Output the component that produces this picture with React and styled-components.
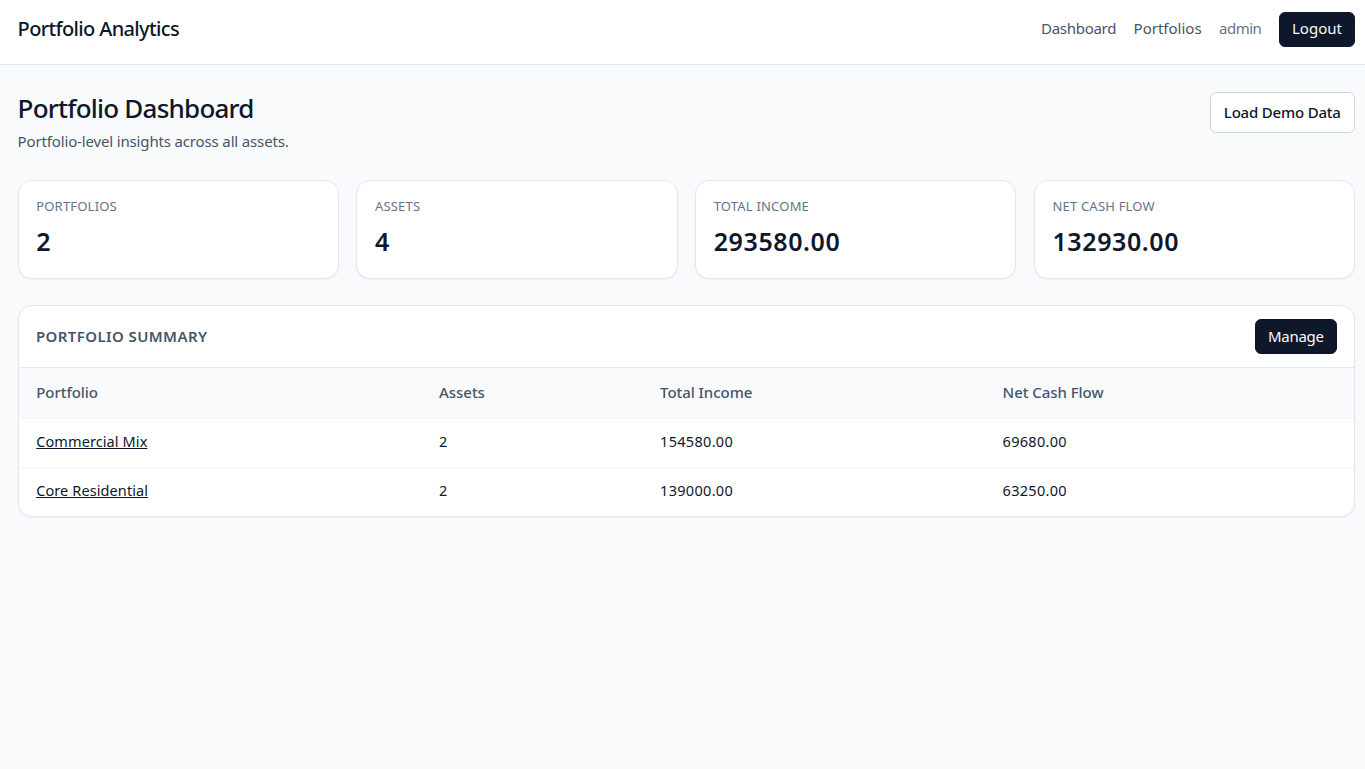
import React from "react";
import styled, { createGlobalStyle } from "styled-components";

const Global = createGlobalStyle`
  html, body { margin: 0; padding: 0; background: #f8fafc; }
  body { font-family: "Noto Sans", "Open Sans", sans-serif; color: #0f172a; min-height: 769px; }
  * { box-sizing: border-box; }
`;

const NavBar = styled.header`
  height: 65px;
  background: #fff;
  border-bottom: 1px solid #e2e8f0;
  display: flex;
  align-items: center;
  justify-content: space-between;
  padding: 12px 10px 17px 17.6px;
`;
const Brand = styled.div`
  font-size: 20px;
  font-weight: 500;
  letter-spacing: -0.65px;
  padding-bottom: 2px;
`;
const NavLinks = styled.nav`
  display: flex;
  align-items: center;
  gap: 17.5px;
`;
const NavLink = styled.a`
  display: block;
  font-size: 15px;
  padding-bottom: 4px;
  letter-spacing: ${(p) => p.$spacing || "-0.3px"};
  color: ${(p) => (p.$muted ? "#64748b" : "#475569")};
`;
const Button = styled.button`
  font-family: inherit;
  font-size: 15px;
  letter-spacing: ${(p) => p.$spacing};
  border-radius: 6px;
  border: 1px solid ${(p) => (p.$dark ? "#0f172a" : "#cbd5e1")};
  background: ${(p) => (p.$dark ? "#0f172a" : "#fff")};
  color: ${(p) => (p.$dark ? "#f8fafc" : "#0f172a")};
  font-weight: ${(p) => (p.$dark ? 400 : 500)};
  height: ${(p) => (p.$dark ? "35px" : "41px")};
  padding: 0 ${(p) => p.$pad || "12px"} ${(p) => p.$lift || "2px"};
`;
const Main = styled.main`
  padding: 27px 10px 0 17.6px;
`;
const PageHead = styled.div`
  display: flex;
  justify-content: space-between;
  align-items: flex-start;
  height: 61px;
`;
const Title = styled.h1`
  margin: 0;
  font-size: 26px;
  line-height: 33px;
  font-weight: 500;
  letter-spacing: -0.78px;
`;
const Subtitle = styled.p`
  margin: 5px 0 0;
  font-size: 15px;
  line-height: 22px;
  letter-spacing: -0.15px;
  color: #475569;
`;
const StatGrid = styled.section`
  display: grid;
  grid-template-columns: repeat(4, 1fr);
  gap: 17.6px;
  margin-top: 27px;
`;
const Card = styled.div`
  background: #fff;
  border: 1px solid #e2e8f0;
  border-radius: 14px;
  box-shadow: 0 1px 2px rgba(15, 23, 42, 0.05);
`;
const StatCard = styled(Card)`
  height: 99px;
  padding: 16px 17.6px;
`;
const StatLabel = styled.div`
  font-size: 13px;
  line-height: 18px;
  letter-spacing: 0.2px;
  color: #64748b;
`;
const StatValue = styled.div`
  margin-top: 9px;
  font-size: 25px;
  line-height: 34px;
  font-weight: 600;
  letter-spacing: 0.6px;
`;
const Panel = styled(Card)`
  margin-top: 26px;
  overflow: hidden;
`;
const PanelHead = styled.div`
  height: 62px;
  display: flex;
  align-items: center;
  justify-content: space-between;
  padding: 0 17.4px;
  border-bottom: 1px solid #e2e8f0;
`;
const PanelTitle = styled.h2`
  margin: 0;
  padding-bottom: 2px;
  font-size: 15px;
  font-weight: 600;
  letter-spacing: 0.4px;
  color: #475569;
`;
const Table = styled.table`
  width: 100%;
  border-collapse: collapse;
  table-layout: fixed;
  font-size: 14.5px;
`;
const Th = styled.th`
  height: 50px;
  padding: 0 17.6px 2px;
  text-align: left;
  font-weight: 500;
  font-size: 15px;
  letter-spacing: -0.05px;
  background: #f8fafc;
  color: #475569;
`;
const Td = styled.td`
  height: 49px;
  padding: 0 17.6px 4px;
  letter-spacing: ${(p) => (p.$num ? "0.3px" : "0.1px")};
  border-top: 1px solid #f1f5f9;
`;
const RowLink = styled.a`
  color: #0f172a;
  text-decoration: underline;
`;

const stats = [
  ["PORTFOLIOS", "2"],
  ["ASSETS", "4"],
  ["TOTAL INCOME", "293580.00"],
  ["NET CASH FLOW", "132930.00"],
];
const rows = [
  ["Commercial Mix", "2", "154580.00", "69680.00"],
  ["Core Residential", "2", "139000.00", "63250.00"],
];

export default function App() {
  return (
    <>
      <Global />
      <NavBar>
        <Brand>Portfolio Analytics</Brand>
        <NavLinks>
          <NavLink>Dashboard</NavLink>
          <NavLink $spacing="0">Portfolios</NavLink>
          <NavLink $muted $spacing="-0.5px">admin</NavLink>
          <Button $dark $spacing="0.03px" $lift="4px">Logout</Button>
        </NavLinks>
      </NavBar>
      <Main>
        <PageHead>
          <div>
            <Title>Portfolio Dashboard</Title>
            <Subtitle>Portfolio-level insights across all assets.</Subtitle>
          </div>
          <Button $spacing="-0.2px" $pad="13.3px">Load Demo Data</Button>
        </PageHead>
        <StatGrid>
          {stats.map(([l, v]) => (
            <StatCard key={l}>
              <StatLabel>{l}</StatLabel>
              <StatValue>{v}</StatValue>
            </StatCard>
          ))}
        </StatGrid>
        <Panel>
          <PanelHead>
            <PanelTitle>PORTFOLIO SUMMARY</PanelTitle>
            <Button $dark $spacing="-0.3px">Manage</Button>
          </PanelHead>
          <Table>
            <colgroup>
              <col style={{ width: 402.9 }} />
              <col style={{ width: 221 }} />
              <col style={{ width: 342.5 }} />
              <col />
            </colgroup>
            <thead>
              <tr>
                <Th>Portfolio</Th>
                <Th>Assets</Th>
                <Th>Total Income</Th>
                <Th>Net Cash Flow</Th>
              </tr>
            </thead>
            <tbody>
              {rows.map((r) => (
                <tr key={r[0]}>
                  <Td><RowLink>{r[0]}</RowLink></Td>
                  <Td $num>{r[1]}</Td>
                  <Td $num>{r[2]}</Td>
                  <Td $num>{r[3]}</Td>
                </tr>
              ))}
            </tbody>
          </Table>
        </Panel>
      </Main>
    </>
  );
}
